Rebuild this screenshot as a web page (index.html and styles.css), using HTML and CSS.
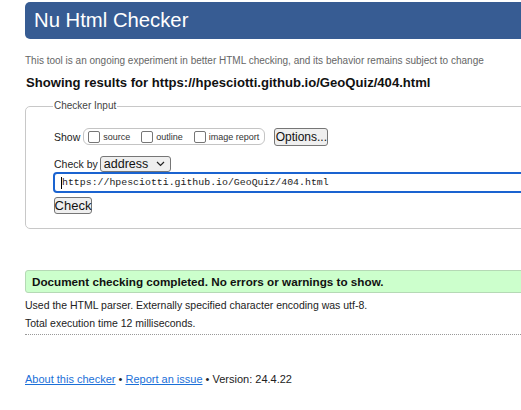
FILE: index.html
```html
<!DOCTYPE html>
<html lang="en">
<head>
<meta charset="utf-8">
<title>Nu Html Checker</title>
<link rel="stylesheet" href="styles.css">
</head>
<body>
<div class="page">
  <h1 class="title">Nu Html Checker</h1>
  <p class="tagline">This tool is an ongoing experiment in better HTML checking, and its behavior remains subject to change</p>
  <h2 class="showing">Showing results for https://hpesciotti.github.io/GeoQuiz/404.html</h2>
  <fieldset class="input-box">
    <legend class="legend">Checker Input</legend>
    <div class="show-row">
      <span class="lbl">Show</span>
      <div class="opts">
        <span class="opt"><span class="cb"></span>source</span>
        <span class="opt"><span class="cb"></span>outline</span>
        <span class="opt"><span class="cb"></span>image report</span>
      </div>
      <span class="btn btn-options">Options...</span>
    </div>
    <div class="checkby-row">
      <span class="lbl">Check by</span>
      <span class="select">address<svg class="chev" width="9" height="6" viewBox="0 0 9 6"><path d="M1 1 L4.5 4.5 L8 1" fill="none" stroke="#222" stroke-width="1.2"/></svg></span>
    </div>
    <div class="url-input"><span class="caret"></span>https://hpesciotti.github.io/GeoQuiz/404.html</div>
    <span class="btn btn-check">Check</span>
  </fieldset>
  <div class="success">Document checking completed. No errors or warnings to show.</div>
  <p class="info">Used the HTML parser. Externally specified character encoding was utf-8.</p>
  <p class="info">Total execution time 12 milliseconds.</p>
  <hr class="dots">
  <p class="footer"><a href="#">About this checker</a> • <a href="#">Report an issue</a> • Version: 24.4.22</p>
</div>
</body>
</html>
```
FILE: styles.css
```css
html, body {
  margin: 0;
  padding: 0;
  background: #fff;
  overflow: hidden;
}
body {
  font-family: "Liberation Sans", Arial, sans-serif;
  color: #111;
}
.page {
  width: 560px;
  padding-left: 25px;
  padding-top: 2px;
}
.title {
  margin: 0;
  height: 37px;
  line-height: 37px;
  padding-left: 9px;
  background: #375c93;
  color: #fff;
  font-size: 20.3px;
  font-weight: normal;
  border-radius: 5px;
}
.tagline {
  margin: 16px 0 0 0;
  font-size: 10px;
  line-height: 12px;
  color: #666;
}
.showing {
  margin: 8px 0 0 1px;
  font-size: 13.1px;
  line-height: 16px;
  font-weight: bold;
  color: #111;
}
.input-box {
  margin: 9px 0 0 0;
  padding: 0 0 0 28px;
  border: 1px solid #c8c8c8;
  border-radius: 5px;
  height: 127px;
  min-width: 0;
}
.legend {
  padding: 0 1px;
  font-size: 10px;
  color: #444;
  line-height: 12px;
  margin-left: -1px;
}
.show-row {
  display: flex;
  align-items: center;
  margin-top: 15px;
  height: 19px;
}
.lbl {
  font-size: 10.5px;
  color: #222;
}
.opts {
  display: flex;
  align-items: center;
  gap: 11px;
  margin-left: 3px;
  height: 15px;
  padding: 0 5px 0 4px;
  border: 1px solid #c4c4c4;
  border-radius: 6px;
}
.opt {
  display: flex;
  align-items: center;
  font-size: 9px;
  color: #333;
}
.cb {
  width: 10px;
  height: 10px;
  border: 1px solid #767676;
  border-radius: 2px;
  margin-right: 3px;
  background: #fff;
}
.btn {
  display: inline-flex;
  align-items: center;
  justify-content: center;
  background: #efefef;
  border: 1px solid #767676;
  border-radius: 3px;
  font-size: 12px;
  color: #111;
  box-sizing: border-box;
}
.btn-options {
  margin-left: 9px;
  width: 54px;
  height: 18px;
}
.checkby-row {
  display: flex;
  align-items: center;
  margin-top: 9px;
  height: 17px;
}
.select {
  display: inline-flex;
  align-items: center;
  justify-content: space-between;
  box-sizing: border-box;
  margin-left: 2px;
  width: 71px;
  height: 16px;
  padding: 0 5px 0 3px;
  background: #efefef;
  border: 1px solid #767676;
  border-radius: 3px;
  font-size: 12.5px;
  color: #111;
}
.url-input {
  display: flex;
  align-items: center;
  box-sizing: border-box;
  height: 21px;
  margin-top: 0;
  margin-left: -1px;
  padding-left: 6px;
  border: 2px solid #1a63d0;
  border-radius: 4px;
  font-family: "Liberation Mono", "Courier New", monospace;
  font-size: 9.9px;
  color: #222;
}
.caret {
  width: 1px;
  height: 12px;
  background: #000;
}
.btn-check {
  margin-top: 4px;
  width: 38px;
  height: 17px;
  font-size: 13px;
}
.success {
  margin-top: 41px;
  height: 23px;
  box-sizing: border-box;
  line-height: 21px;
  padding-left: 6px;
  background: #ccffcc;
  border: 1px solid #b5d9b5;
  border-radius: 3px;
  font-size: 11.7px;
  font-weight: bold;
  color: #111;
}
.info {
  margin: 6px 0 0 0;
  font-size: 10.5px;
  line-height: 12px;
  color: #222;
}
.info + .info {
  margin-top: 6px;
}
.dots {
  margin: 5px 0 0 0;
  border: 0;
  border-top: 1px dotted #999;
  height: 0;
}
.footer {
  margin: 37px 0 0 0;
  font-size: 11px;
  line-height: 14px;
  color: #222;
}
.footer a {
  color: #1a6fd8;
}
```
